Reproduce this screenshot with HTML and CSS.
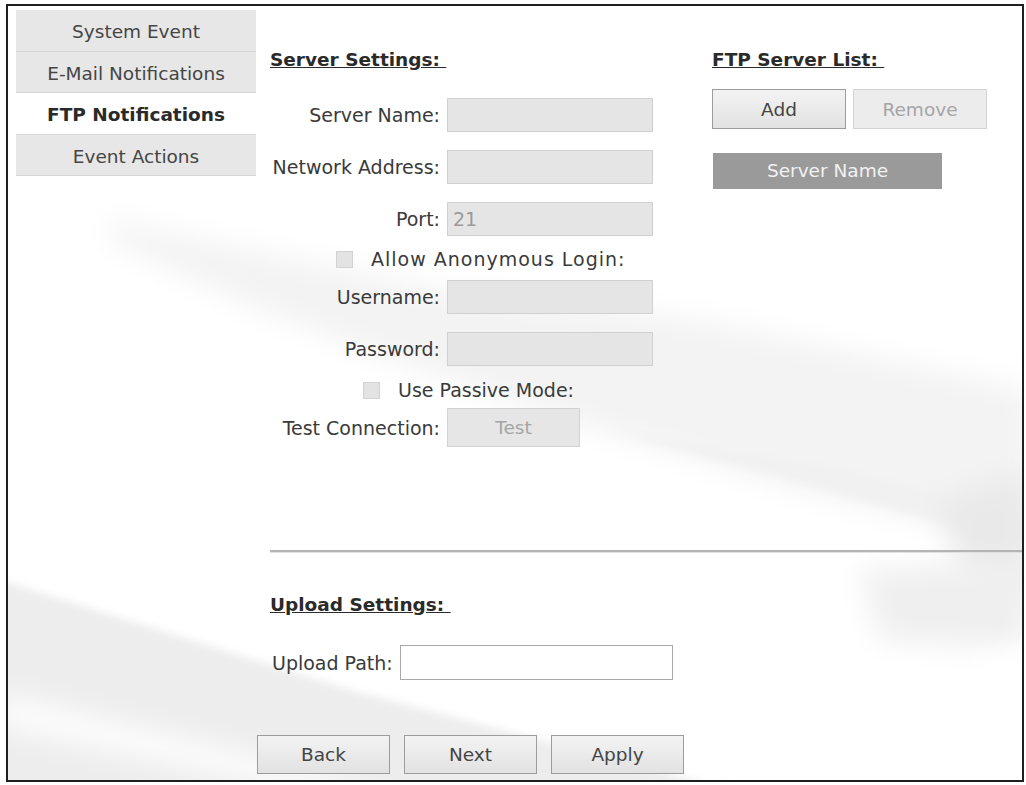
FILE: index.html
```html
<!DOCTYPE html>
<html>
<head>
    <meta charset="UTF-8">
    <title>FTP Notifications</title>
    <link rel="stylesheet" href="styles.css">
</head>
<body>
<div id="frame">
    <svg class="backdrop" viewBox="8 6 1014 774" preserveAspectRatio="none" aria-hidden="true">
        <defs>
            <filter id="soft" x="-20%" y="-20%" width="140%" height="140%"><feGaussianBlur stdDeviation="14"/></filter>
            <filter id="softer" x="-20%" y="-20%" width="140%" height="140%"><feGaussianBlur stdDeviation="4"/></filter>
        </defs>
        <polygon filter="url(#soft)" fill="#f3f3f3" points="110,220 450,292 700,320 1030,390 1030,548 820,495 600,430 420,370 250,305 110,240"/>
        <polygon filter="url(#softer)" fill="#f1f1f1" points="600,428 820,488 1030,548 1030,520 850,470"/>
        <polygon filter="url(#soft)" fill="#e9e9e9" points="940,500 1030,470 1030,600 960,570"/>
        <polygon filter="url(#soft)" fill="#efefef" points="860,570 1030,560 1030,650 880,640"/>
        <polygon filter="url(#softer)" fill="#ededed" points="0,580 350,690 730,790 0,790"/>
        <polygon filter="url(#soft)" fill="#ffffff" points="0,695 0,725 300,790 390,790"/>
        <polygon filter="url(#soft)" fill="#ffffff" points="770,790 1030,640 1030,680 840,790"/>
    </svg>

    <div id="sidebar">
        <div class="tab">System Event</div>
        <div class="tab">E-Mail Notifications</div>
        <div class="tab active">FTP Notifications</div>
        <div class="tab">Event Actions</div>
    </div>

    <div id="main">
        <div class="top">
            <div class="settings">
                <h2>Server Settings:&nbsp;</h2>
                <div class="row first">
                    <label>Server Name:</label>
                    <input class="box" type="text" disabled>
                </div>
                <div class="row">
                    <label>Network Address:</label>
                    <input class="box" type="text" disabled>
                </div>
                <div class="row">
                    <label>Port:</label>
                    <input class="box" type="text" value="21" disabled>
                </div>
                <div class="check anon">
                    <span class="tick"></span>
                    <span class="wide">Allow Anonymous Login:</span>
                </div>
                <div class="row after-check">
                    <label>Username:</label>
                    <input class="box" type="text" disabled>
                </div>
                <div class="row">
                    <label>Password:</label>
                    <input class="box" type="password" disabled>
                </div>
                <div class="check passive">
                    <span class="tick"></span>
                    <span>Use Passive Mode:</span>
                </div>
                <div class="row test">
                    <label>Test Connection:</label>
                    <button class="btn small" disabled>Test</button>
                </div>
            </div>

            <div class="serverlist">
                <h2>FTP Server List:&nbsp;</h2>
                <div class="listbuttons">
                    <button class="btn">Add</button>
                    <button class="btn" disabled>Remove</button>
                </div>
                <div class="listhead">Server Name</div>
            </div>
        </div>

        <hr class="divider">

        <div class="upload">
            <h2>Upload Settings:&nbsp;</h2>
            <div class="uploadrow">
                <label>Upload Path:</label>
                <input class="path" type="text">
            </div>
        </div>

        <div class="actions">
            <button class="btn">Back</button>
            <button class="btn">Next</button>
            <button class="btn">Apply</button>
        </div>
    </div>
</div>
</body>
</html>
```

FILE: styles.css
```css
body{
    margin: 0;
    background: #fff;
    font-family: "DejaVu Sans", Verdana, sans-serif;
    font-size: 18.5px;
    color: #3a3a3a;
}
#frame{
    position: relative;
    box-sizing: border-box;
    width: 1018px;
    height: 778px;
    margin: 4px 0 0 6px;
    border: 2px solid #1f1f1f;
    display: flex;
    overflow: hidden;
}
.backdrop{
    position: absolute;
    left: 0;
    top: 0;
    width: 100%;
    height: 100%;
    z-index: 0;
}
#sidebar{
    position: relative;
    z-index: 1;
    width: 240px;
    margin: 4px 0 0 8px;
    align-self: flex-start;
}
.tab{
    height: 41.5px;
    padding-top: 3px;
    line-height: 38px;
    text-align: center;
    background: #e7e7e7;
    border-bottom: 1px solid #d6d6d6;
    color: #454545;
    box-sizing: border-box;
}
.tab.active{
    background: #fff;
    font-weight: bold;
    color: #2a2a2a;
}
#main{
    position: relative;
    z-index: 1;
    flex: 1;
    margin-left: 1px;
    display: flex;
    flex-direction: column;
}
h2{
    margin: 0;
    font-size: 18.5px;
    line-height: 24px;
    text-decoration: underline;
    color: #2a2a2a;
}
.top{
    display: flex;
    padding: 42px 0 0 13px;
    height: 405px;
}
.settings{
    width: 442px;
    font-size: 19px;
}
.row{
    display: flex;
    align-items: center;
    height: 34px;
    margin-top: 18px;
}
.row.first{
    margin-top: 26px;
}
.row.after-check{
    margin-top: 8px;
}
.row label{
    width: 170px;
    text-align: right;
    margin-right: 7px;
}
.box{
    box-sizing: border-box;
    width: 206px;
    height: 34px;
    background: #e5e5e5;
    border: 1px solid #d0d0d0;
    font: inherit;
    color: #9a9a9a;
    padding: 0 5px;
}
.check{
    display: flex;
    align-items: center;
    height: 26px;
    margin-top: 10px;
}
.check.anon{
    padding-left: 66px;
}
.check.passive{
    padding-left: 93px;
    margin-top: 11px;
}
.wide{
    letter-spacing: 1px;
}
.tick{
    width: 15px;
    height: 15px;
    background: #e3e3e3;
    border: 1px solid #d2d2d2;
    margin-right: 18px;
}
.row.test{
    height: 39px;
    margin-top: 5px;
}
.btn{
    box-sizing: border-box;
    width: 134px;
    height: 40px;
    font-family: inherit;
    font-size: 18.5px;
    color: #444;
    background: linear-gradient(#f3f3f3, #e2e2e2);
    border: 1px solid #9c9c9c;
    padding: 0;
}
.btn:disabled{
    color: #a5a5a5;
    background: #ececec;
    border-color: #d3d3d3;
}
.btn.small{
    width: 133px;
    height: 39px;
    background: #e6e6e6;
}
.listbuttons{
    display: flex;
    gap: 7px;
    margin-top: 17px;
}
.listhead{
    width: 229px;
    height: 36px;
    line-height: 36px;
    margin-top: 24px;
    margin-left: 1px;
    background: #9a9a9a;
    color: #f2f2f2;
    text-align: center;
}
.divider{
    margin: 97px 0 0 13px;
    height: 0;
    border: 0;
    border-top: 2px solid #b4b4b4;
    border-bottom: 1px solid #e2e2e2;
}
.upload{
    padding: 40px 0 0 13px;
    font-size: 19px;
}
.uploadrow{
    display: flex;
    align-items: center;
    margin-top: 28px;
}
.uploadrow label{
    margin-left: 2px;
    margin-right: 7px;
}
.path{
    box-sizing: border-box;
    width: 273px;
    height: 35px;
    background: #fff;
    border: 1px solid #a8a8a8;
    font: inherit;
}
.actions{
    display: flex;
    gap: 14px;
    margin-top: 55px;
}
.actions .btn{
    width: 133px;
    height: 39px;
}
```
